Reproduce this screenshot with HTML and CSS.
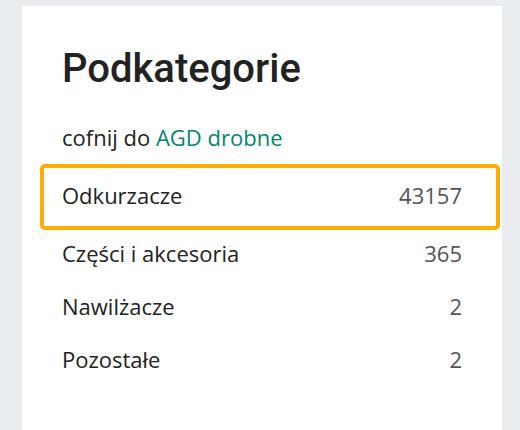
FILE: index.html
```html
<!DOCTYPE html>
<html lang="pl">
<head>
<meta charset="utf-8">
<link rel="stylesheet" href="styles.css">
</head>
<body>
<div class="card">
  <h2 class="title">Podkategorie</h2>
  <p class="back">cofnij do <a href="#" class="back-link">AGD drobne</a></p>
  <ul class="list">
    <li class="item item-focus"><span class="name">Odkurzacze</span><span class="count">43157</span></li>
    <li class="item"><span class="name">Części i akcesoria</span><span class="count">365</span></li>
    <li class="item"><span class="name">Nawilżacze</span><span class="count">2</span></li>
    <li class="item"><span class="name">Pozostałe</span><span class="count">2</span></li>
  </ul>
</div>
</body>
</html>
```
FILE: styles.css
```css
html, body {
  margin: 0;
  padding: 0;
  height: 100%;
}
body {
  background: #e9edf0;
  overflow: hidden;
}
.card {
  box-sizing: border-box;
  margin: 6px 0 0 22px;
  width: 480px;
  min-height: 424px;
  background: #ffffff;
  padding: 39px 40px 0 40px;
}
.title {
  margin: 0;
  font-family: Roboto, "Liberation Sans", sans-serif;
  font-weight: 500;
  font-size: 40px;
  line-height: 48px;
  color: #222222;
}
.back {
  margin: 29px 0 0 0;
  font-family: "Open Sans", "Liberation Sans", sans-serif;
  font-size: 22px;
  line-height: 30px;
  color: #222222;
}
.back-link {
  color: #00876f;
  text-decoration: none;
}
.list {
  list-style: none;
  margin: 0;
  padding: 0;
}
.item {
  display: flex;
  justify-content: space-between;
  font-family: "Open Sans", "Liberation Sans", sans-serif;
  font-size: 22px;
  line-height: 30px;
  color: #222222;
  padding: 8px 0 15px 0;
}
.count {
  color: #555555;
}
.item-focus {
  margin: 12px -38px 0 -22px;
  padding: 12px 34px 16px 18px;
  border: 4px solid #ffad00;
  border-radius: 5px;
}
```
